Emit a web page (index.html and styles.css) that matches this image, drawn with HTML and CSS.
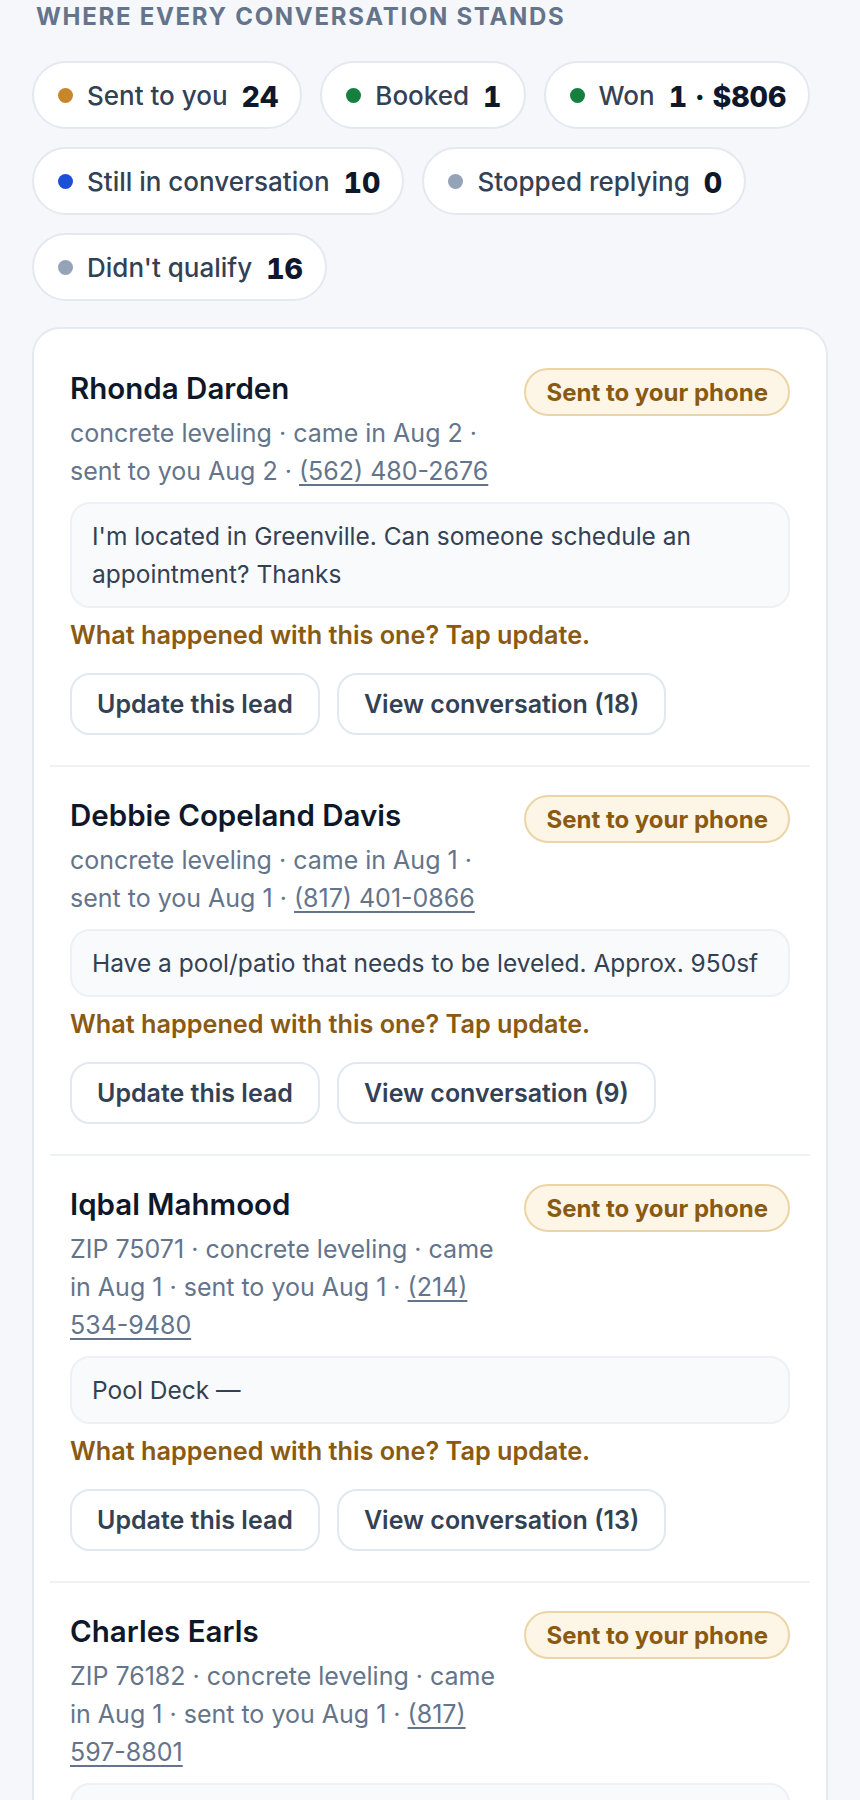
FILE: index.html
```html
<!DOCTYPE html>
<html lang="en">
<head>
<meta charset="utf-8">
<title>Leads</title>
<link rel="stylesheet" href="styles.css">
</head>
<body>
<main class="page">
  <h2 class="section-title">Where every conversation stands</h2>
  <div class="chips">
    <div class="chip"><span class="dot dot-amber"></span><span class="chip-label">Sent to you</span><span class="chip-num">24</span></div>
    <div class="chip"><span class="dot dot-green"></span><span class="chip-label">Booked</span><span class="chip-num">1</span></div>
    <div class="chip"><span class="dot dot-green"></span><span class="chip-label">Won</span><span class="chip-num">1 · $806</span></div>
    <div class="chip"><span class="dot dot-blue"></span><span class="chip-label">Still in conversation</span><span class="chip-num">10</span></div>
    <div class="chip"><span class="dot dot-gray"></span><span class="chip-label">Stopped replying</span><span class="chip-num">0</span></div>
    <div class="chip"><span class="dot dot-gray"></span><span class="chip-label">Didn't qualify</span><span class="chip-num">16</span></div>
  </div>

  <section class="card">
    <article class="lead">
      <div class="lead-head">
        <div class="lead-info">
          <div class="lead-name">Rhonda Darden</div>
          <div class="lead-meta">concrete leveling · came in Aug 2 · sent to you Aug 2 · <a class="phone" href="#">(562) 480-2676</a></div>
        </div>
        <span class="badge">Sent to your phone</span>
      </div>
      <div class="message">I'm located in Greenville. Can someone schedule an appointment? Thanks</div>
      <div class="prompt">What happened with this one? Tap update.</div>
      <div class="actions">
        <button class="btn" type="button">Update this lead</button>
        <button class="btn" type="button">View conversation (18)</button>
      </div>
    </article>

    <article class="lead">
      <div class="lead-head">
        <div class="lead-info">
          <div class="lead-name">Debbie Copeland Davis</div>
          <div class="lead-meta">concrete leveling · came in Aug 1 · sent to you Aug 1 · <a class="phone" href="#">(817) 401-0866</a></div>
        </div>
        <span class="badge">Sent to your phone</span>
      </div>
      <div class="message">Have a pool/patio that needs to be leveled. Approx. 950sf</div>
      <div class="prompt">What happened with this one? Tap update.</div>
      <div class="actions">
        <button class="btn" type="button">Update this lead</button>
        <button class="btn" type="button">View conversation (9)</button>
      </div>
    </article>

    <article class="lead">
      <div class="lead-head">
        <div class="lead-info">
          <div class="lead-name">Iqbal Mahmood</div>
          <div class="lead-meta">ZIP 75071 · concrete leveling · came in Aug 1 · sent to you Aug 1 · <a class="phone" href="#">(214) 534-9480</a></div>
        </div>
        <span class="badge">Sent to your phone</span>
      </div>
      <div class="message">Pool Deck —</div>
      <div class="prompt">What happened with this one? Tap update.</div>
      <div class="actions">
        <button class="btn" type="button">Update this lead</button>
        <button class="btn" type="button">View conversation (13)</button>
      </div>
    </article>

    <article class="lead">
      <div class="lead-head">
        <div class="lead-info">
          <div class="lead-name">Charles Earls</div>
          <div class="lead-meta">ZIP 76182 · concrete leveling · came in Aug 1 · sent to you Aug 1 · <a class="phone" href="#">(817) 597-8801</a></div>
        </div>
        <span class="badge">Sent to your phone</span>
      </div>
      <div class="message">Driveway —</div>
      <div class="prompt">What happened with this one? Tap update.</div>
      <div class="actions">
        <button class="btn" type="button">Update this lead</button>
        <button class="btn" type="button">View conversation</button>
      </div>
    </article>
  </section>
</main>
</body>
</html>
```

FILE: styles.css
```css
* { box-sizing: border-box; }

html, body {
  margin: 0;
  padding: 0;
  background: #f5f7fa;
}

body {
  font-family: Inter, "Noto Sans", "Liberation Sans", sans-serif;
  color: #0f172a;
}

.page {
  padding: 0 32px 40px;
}

.section-title {
  margin: 0 0 30px;
  padding: 3px 0 0 4px;
  font-size: 24px;
  line-height: 28px;
  font-weight: 700;
  letter-spacing: 1.7px;
  text-transform: uppercase;
  color: #64748b;
}

.chips {
  display: flex;
  flex-wrap: wrap;
  gap: 18px 18px;
}

.chip {
  display: inline-flex;
  align-items: center;
  gap: 14px;
  height: 68px;
  padding: 0 22px 0 24px;
  background: #ffffff;
  border: 2px solid #e4e8ef;
  border-radius: 999px;
}

.dot {
  width: 15px;
  height: 15px;
  border-radius: 50%;
  flex-shrink: 0;
}
.dot-amber { background: #c8862b; }
.dot-green { background: #15803d; }
.dot-blue { background: #1d4ed8; }
.dot-gray { background: #94a3b8; }

.chip-label {
  font-size: 26px;
  font-weight: 500;
  color: #334155;
}

.chip-num {
  font-size: 28.5px;
  font-weight: 800;
  font-variant-numeric: tabular-nums;
  color: #0f172a;
  padding-top: 3px;
}

.card {
  margin-top: 26px;
  background: #ffffff;
  border: 2px solid #e5e9f0;
  border-radius: 28px;
  padding: 11px 16px 0;
}

.lead {
  padding: 28px 20px 30px;
}
.lead + .lead {
  border-top: 2px solid #eef1f5;
}

.lead-head {
  display: flex;
  align-items: flex-start;
  gap: 24px;
}

.lead-info {
  flex: 1;
  min-width: 0;
}

.lead-name {
  font-size: 29.5px;
  line-height: 41px;
  font-weight: 600;
  color: #0f172a;
}

.lead-meta {
  margin-top: 5px;
  font-size: 25px;
  line-height: 38px;
  color: #64748b;
}

.phone {
  color: #64748b;
  text-decoration: underline;
  text-decoration-thickness: 2px;
  text-underline-offset: 4px;
}

.badge {
  flex-shrink: 0;
  display: inline-flex;
  align-items: center;
  height: 48px;
  padding: 0 20px;
  background: #fdf5e6;
  border: 2px solid #ebd5a6;
  border-radius: 999px;
  font-size: 24px;
  font-weight: 700;
  color: #8a5a12;
}

.message {
  margin-top: 12px;
  padding: 13px 16px 13px 20px;
  background: #f9fafc;
  border: 2px solid #edf0f4;
  border-radius: 20px;
  font-size: 24.5px;
  line-height: 38px;
  color: #334155;
}

.prompt {
  margin-top: 10px;
  font-size: 25.25px;
  line-height: 34px;
  font-weight: 600;
  color: #8a5a12;
}

.actions {
  display: flex;
  gap: 17px;
  margin-top: 21px;
}

.btn {
  display: inline-flex;
  align-items: center;
  height: 62px;
  padding: 0 25px;
  background: #ffffff;
  border: 2px solid #e2e8f0;
  border-radius: 20px;
  font-family: inherit;
  font-size: 25px;
  font-weight: 600;
  color: #334155;
  cursor: pointer;
}
```
